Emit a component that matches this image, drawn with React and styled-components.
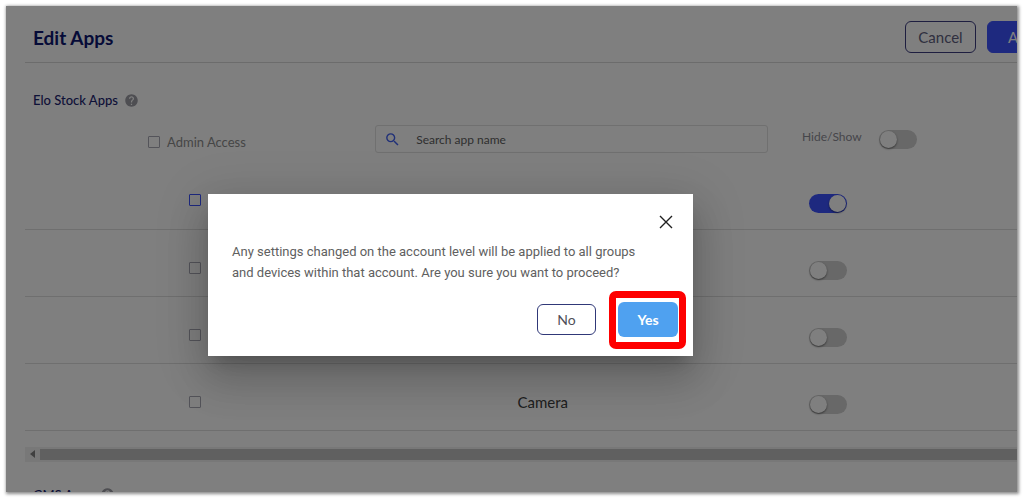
import * as React from "react";
import styled, { createGlobalStyle } from "styled-components";
import { MdHelp, MdSearch } from "react-icons/md";

const GlobalStyle = createGlobalStyle`
  *, *::before, *::after {
    box-sizing: border-box;
  }

  body {
    margin: 0;
    background: #fff;
    font-family: Lato, "Liberation Sans", sans-serif;
  }

  button, input {
    font-family: inherit;
  }
`;

const Frame = styled.div`
  position: relative;
  height: calc(100vh - 12px);
  margin: 6px;
  box-shadow: 1px 1px 3px 1px rgba(0, 0, 0, 0.45);
`;

const Page = styled.main`
  height: 100%;
  padding-left: 19px;
  overflow: hidden;
`;

const Header = styled.header`
  display: flex;
  align-items: center;
  justify-content: space-between;
  height: 57px;
  padding: 6px 0 0 8px;
  border-bottom: 1px solid #d8d8d8;
`;

const Title = styled.h1`
  margin: 0;
  color: #0c1670;
  font-size: 19px;
  font-weight: 700;
`;

const Actions = styled.div`
  display: flex;
  gap: 11px;
  margin-right: -50px;
`;

const Button = styled.button`
  height: 32px;
  padding: 0 12px;
  border: 1px solid ${({ $primary }) => ($primary ? "#3c52ff" : "#3c3c80")};
  border-radius: 6px;
  background: ${({ $primary }) => ($primary ? "#3c52ff" : "transparent")};
  color: ${({ $primary }) => ($primary ? "#fff" : "#606080")};
  min-width: ${({ $primary }) => ($primary ? "80px" : "71px")};
  font-size: 15px;
`;

const SectionTitle = styled.h2`
  display: flex;
  align-items: center;
  gap: 6px;
  height: 20px;
  margin: 27px 0 0 8px;
  color: #1c2470;
  font-size: 13px;
  font-weight: 500;

  svg {
    color: #9c9ca4;
  }
`;

const Filters = styled.div`
  display: grid;
  grid-template-columns: 35.3% 39.6% 1fr;
  align-items: center;
  height: 28px;
  margin-top: 15px;
`;

const CheckField = styled.label`
  display: flex;
  align-items: center;
  gap: 7px;
  padding: 5px 0 0 123px;
  color: #8c8c8c;
  font-size: 13px;
`;

const CheckBox = styled.input.attrs({ type: "checkbox" })`
  appearance: none;
  display: block;
  width: 12px;
  height: 12px;
  margin: 0;
  border: 1px solid ${({ $active }) => ($active ? "#3c52ff" : "#a8a8b4")};
  border-radius: 1px;
`;

const SearchBox = styled.div`
  display: flex;
  align-items: center;
  gap: 15px;
  height: 28px;
  padding-left: 8px;
  border: 1px solid #e0e0e0;
  border-radius: 3px;

  svg {
    flex: none;
    color: #4060f0;
  }
`;

const SearchInput = styled.input`
  flex: 1;
  min-width: 0;
  padding: 0;
  border: 0;
  outline: 0;
  background: transparent;
  font-size: 12px;

  &::placeholder {
    color: #606060;
    opacity: 1;
  }
`;

const SwitchField = styled.label`
  display: flex;
  align-items: flex-start;
  gap: 17px;
  padding: 1px 0 0 34px;
  color: #8c8c94;
  font-size: 12px;
  line-height: 14px;
`;

const Switch = styled.input.attrs({ type: "checkbox", role: "switch" })`
  appearance: none;
  display: flex;
  flex: none;
  width: 38px;
  height: 19px;
  margin: 0;
  padding: 1px;
  border-radius: 10px;
  background: #d0d0d0;

  &::before {
    content: "";
    width: 17px;
    height: 17px;
    border-radius: 50%;
    background: #fff;
    box-shadow: 0 1px 2px rgba(0, 0, 0, 0.5);
  }

  &:checked {
    justify-content: flex-end;
    background: #3c52ff;
  }
`;

const AppTable = styled.table`
  width: 100%;
  margin-top: 9px;
  border-collapse: collapse;
  table-layout: fixed;
`;

const Row = styled.tr`
  height: 67px;
  border-bottom: 1px solid #dedede;
`;

const Cell = styled.td`
  width: ${({ $width }) => $width};
  padding: 10px 0 0;
  color: #404040;
  font-size: 15px;
  text-align: center;

  input {
    margin: 0 auto;
  }
`;

const SwitchCell = styled(Cell)`
  padding-top: 16px;
`;

const ScrollBar = styled.div`
  display: flex;
  align-items: center;
  gap: 5px;
  height: 15px;
  margin: 16px 0 -4px;
  padding-left: 5px;
  background: #f1f1f1;
`;

const ScrollArrow = styled.span`
  border: 4px solid transparent;
  border-right: 5px solid #808080;
  border-left: 0;
`;

const ScrollThumb = styled.span`
  flex: 1;
  height: 11px;
  background: #c1c1c1;
`;

const Overlay = styled.div`
  position: absolute;
  inset: 0;
  display: flex;
  align-items: center;
  justify-content: center;
  padding: 52px 122px 0 0;
  background: rgba(0, 0, 0, 0.5);
`;

const Dialog = styled.div`
  width: 485px;
  padding: 21px 15px 19px 24px;
  background: #fff;
  box-shadow: 0 11px 15px -7px rgba(0, 0, 0, 0.2),
    0 24px 38px 3px rgba(0, 0, 0, 0.14), 0 9px 46px 8px rgba(0, 0, 0, 0.12);
`;

const CloseButton = styled.button`
  display: block;
  margin: 0 5px 0 auto;
  padding: 0;
  border: 0;
  background: none;
  color: #202020;

  svg {
    display: block;
  }
`;

const Message = styled.p`
  margin: 12px 0 0;
  color: #606060;
  font-family: Roboto, "Liberation Sans", sans-serif;
  font-size: 13px;
  line-height: 21px;
`;

const DialogActions = styled.div`
  display: flex;
  align-items: center;
  justify-content: flex-end;
  gap: 22px;
  margin-top: 19px;
`;

const DialogButton = styled.button`
  width: ${({ $primary }) => ($primary ? "60px" : "59px")};
  height: ${({ $primary }) => ($primary ? "35px" : "31px")};
  padding: 0;
  border: ${({ $primary }) => ($primary ? "0" : "1px solid #303878")};
  border-radius: 6px;
  background: ${({ $primary }) => ($primary ? "#4fa1f0" : "#fff")};
  color: ${({ $primary }) => ($primary ? "#fff" : "#505058")};
  font-size: 14px;
  font-weight: ${({ $primary }) => ($primary ? 700 : 400)};
`;

const Highlight = styled.div`
  position: relative;

  &::after {
    content: "";
    position: absolute;
    inset: -11px -8px -12px -9px;
    border: 7px solid #fe0000;
    border-radius: 7px;
    pointer-events: none;
  }
`;

const apps = [
  { id: 1, active: true, shown: true },
  { id: 2 },
  { id: 3 },
  { id: 4, name: "Camera" },
];

function AppRow({ app }) {
  const label = app.name || `App ${app.id}`;

  return (
    <Row>
      <Cell $width="34.2%">
        <CheckBox $active={app.active} aria-label={`${label} admin access`} />
      </Cell>
      <Cell $width="36%">{app.name}</Cell>
      <SwitchCell $width="21.5%">
        <Switch defaultChecked={app.shown} aria-label={`Show ${label}`} />
      </SwitchCell>
      <Cell />
    </Row>
  );
}

function ConfirmDialog() {
  return (
    <Overlay>
      <Dialog role="dialog" aria-modal="true" aria-describedby="message">
        <CloseButton type="button" aria-label="Close">
          <svg width="14" height="14" viewBox="0 0 14 14">
            <path d="M1 1L13 13M13 1L1 13" stroke="currentColor" strokeWidth="1.4" />
          </svg>
        </CloseButton>
        <Message id="message">
          Any settings changed on the account level will be applied to all groups
          <br />
          and devices within that account. Are you sure you want to proceed?
        </Message>
        <DialogActions>
          <DialogButton type="button">No</DialogButton>
          <Highlight>
            <DialogButton type="button" $primary>
              Yes
            </DialogButton>
          </Highlight>
        </DialogActions>
      </Dialog>
    </Overlay>
  );
}

function App() {
  return (
    <Frame>
      <GlobalStyle />
      <Page>
        <Header>
          <Title>Edit Apps</Title>
          <Actions>
            <Button type="button">Cancel</Button>
            <Button type="button" $primary>
              Apply
            </Button>
          </Actions>
        </Header>

        <SectionTitle>
          Elo Stock Apps <MdHelp size={15} />
        </SectionTitle>

        <Filters>
          <CheckField>
            <CheckBox />
            Admin Access
          </CheckField>
          <SearchBox>
            <MdSearch size={17} />
            <SearchInput placeholder="Search app name" aria-label="Search app name" />
          </SearchBox>
          <SwitchField>
            Hide/Show
            <Switch />
          </SwitchField>
        </Filters>

        <AppTable>
          <tbody>
            {apps.map((app) => (
              <AppRow key={app.id} app={app} />
            ))}
          </tbody>
        </AppTable>

        <ScrollBar>
          <ScrollArrow />
          <ScrollThumb />
        </ScrollBar>

        <SectionTitle>
          GMS Apps <MdHelp size={15} />
        </SectionTitle>
      </Page>
      <ConfirmDialog />
    </Frame>
  );
}

export default App;
